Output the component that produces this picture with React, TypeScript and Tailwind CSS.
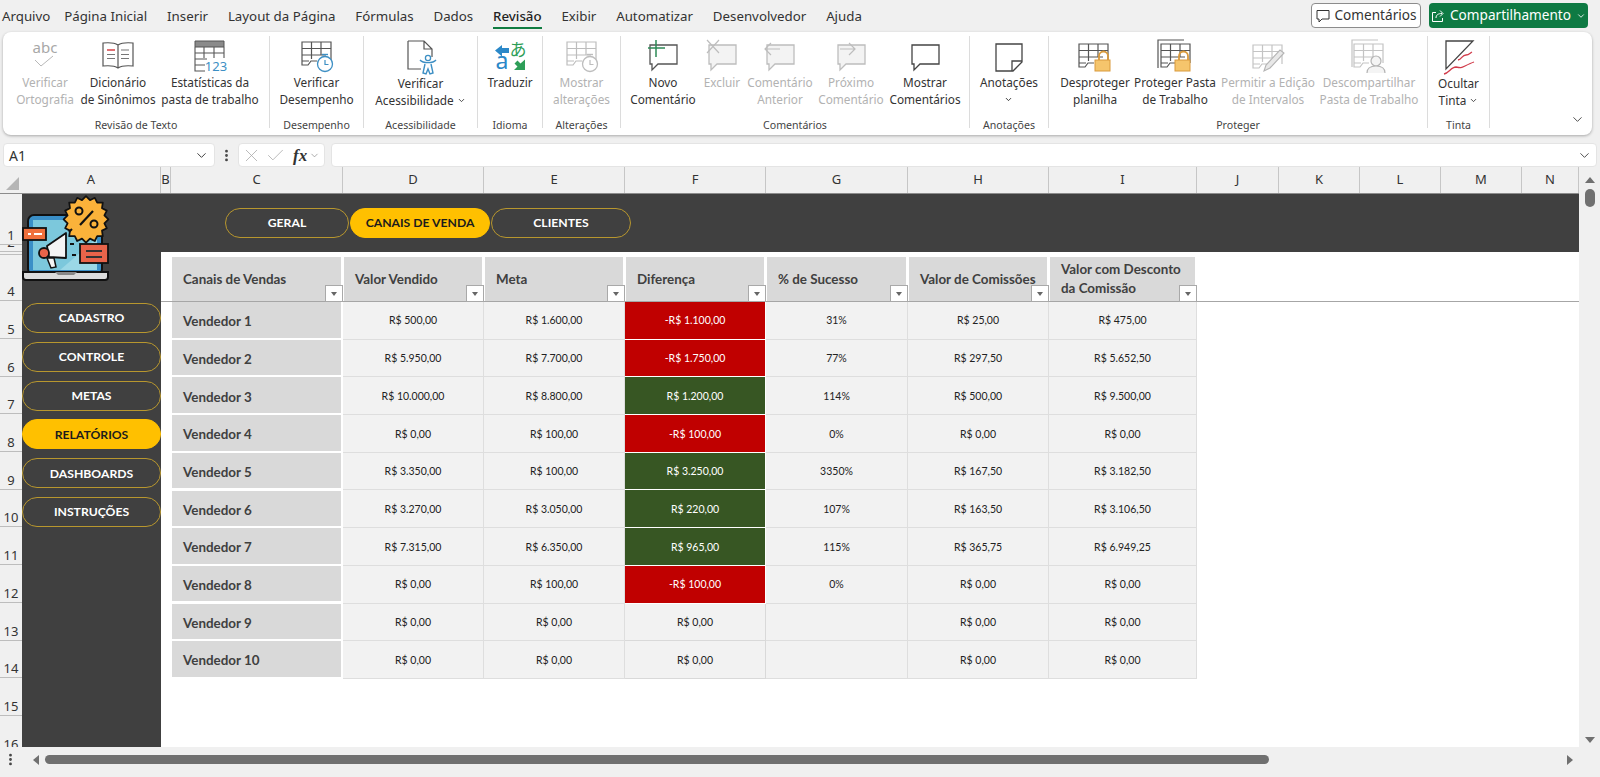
import React from 'react';
import { ChevronDown, EllipsisVertical, X, Check } from 'lucide-react';

const tabs = ['Arquivo', 'Página Inicial', 'Inserir', 'Layout da Página', 'Fórmulas', 'Dados', 'Revisão', 'Exibir', 'Automatizar', 'Desenvolvedor', 'Ajuda'];

const DARK = '#555555';

const GridLines: React.FC<{ c: string; fill?: string }> = ({ c, fill = 'none' }) => (
  <g fill="none" stroke={c} strokeWidth="1.2">
    <path d="M3 22V3h29v19M3 3h29" fill={fill} />
    <path d="M3 9.5h29M3 16h24M3 22h7M12.5 3v17M22 3v13" />
    <path d="M3 22v4h6l3-4h6" />
  </g>
);

const SpellIcon = () => (
  <svg width="36" height="34" viewBox="0 0 36 34" className="overflow-visible">
    <text x="18" y="14" textAnchor="middle" fontSize="15" fill="#a8a8a8" fontFamily="Noto Sans, sans-serif">abc</text>
    <path d="M8 21l6 6L26 17" fill="none" stroke="#b8b8b8" strokeWidth="1" />
  </svg>
);

const BookIcon = () => (
  <svg width="36" height="34" viewBox="0 0 36 34">
    <path d="M18 6C15 4 8 3.500 3 4v23c5-.5 12 0 15 2 3-2 10-2.500 15-2V4c-5-.5-12 0-15 2zM18 6v23" fill="#fff" stroke={DARK} strokeWidth="1.2" />
    <path d="M7 11h8" stroke="#d13438" strokeWidth="1.4" />
    <path d="M7 15.500h8M7 19.500h8M21 11h8M21 15.500h8M21 19.500h8" stroke="#777" strokeWidth="1.2" />
  </svg>
);

const StatsIcon = () => (
  <svg width="36" height="34" viewBox="0 0 36 34" className="overflow-visible">
    <path d="M3 2h29v6H3z" fill="#8a8a8a" stroke={DARK} />
    <path d="M3 8v24h10M32 8v11M3 14h29M3 20h12M3 26h10M12 8v11M22 8v11" fill="none" stroke={DARK} strokeWidth="1.1" />
    <text x="24" y="31.500" textAnchor="middle" fontSize="13" fill="#3d8fc4" fontFamily="Noto Sans, sans-serif">123</text>
  </svg>
);

const ClockGrid: React.FC<{ disabled?: boolean }> = ({ disabled }) => {
  const c = disabled ? '#bdbdbd' : DARK;
  const b = disabled ? '#bdbdbd' : '#3d8fc4';
  return (
    <svg width="36" height="34" viewBox="0 0 36 34">
      <GridLines c={c} />
      <circle cx="26" cy="25" r="7.500" fill="#fff" stroke={b} strokeWidth="1.3" />
      <path d="M26 21v4.500h3.500" fill="none" stroke={b} strokeWidth="1.2" />
      <path d="M23 15.500h6" stroke={b} strokeWidth="1.4" />
    </svg>
  );
};

const AccessIcon = () => (
  <svg width="36" height="38" viewBox="0 0 36 38">
    <path d="M5 2h16l8 8v8M5 2v28h13M21 2v8h8" fill="#fff" stroke={DARK} strokeWidth="1.2" />
    <circle cx="25" cy="19" r="2.600" fill="none" stroke="#3d8fc4" strokeWidth="1.3" />
    <path d="M17 21c3 3.500 13 3.500 16 0M22 25l-2 9 3 1 2-5 2 5 3-1-2-9" fill="none" stroke="#3d8fc4" strokeWidth="1.4" />
  </svg>
);

const TranslateIcon = () => (
  <svg width="36" height="34" viewBox="0 0 36 34" className="overflow-visible">
    <path d="M3 11.500L10 6v3h7v5h-7v3.500z" fill="#2b88c8" />
    <text x="10" y="30" textAnchor="middle" fontSize="23" fill="#2b88c8" fontFamily="Noto Sans, sans-serif">a</text>
    <text x="26" y="17" textAnchor="middle" fontSize="17" fill="#2e9e58" fontFamily="Noto Sans CJK JP, sans-serif">あ</text>
    <path d="M33 20.500v10.500H22l3.500-3.500-3-3 3-3 3 3z" fill="#2e9e58" />
  </svg>
);

const Bubble: React.FC<{ c: string; fill?: string; children?: React.ReactNode; x?: number }> = ({ c, fill = '#fff', children, x = 3 }) => (
  <svg width="36" height="34" viewBox="0 0 36 34">
    <path d={`M${x + 2} 6h27v19H${x + 10}l-6 6v-6H${x + 2}z`} fill={fill} stroke={c} strokeWidth="1.3" />
    {children}
  </svg>
);

const NoteIcon = () => (
  <svg width="36" height="34" viewBox="0 0 36 34">
    <path d="M5 5h26v18l-9 9H5z" fill="#fff" stroke="#444" strokeWidth="1.3" />
    <path d="M31 22H21v10" fill="none" stroke="#444" strokeWidth="1.3" />
  </svg>
);

const Lock = () => (
  <g>
    <path d="M22 21v-4a4.500 4.500 0 019 0v4" fill="none" stroke="#d99a3c" strokeWidth="1.800" />
    <rect x="18" y="21" width="15" height="11" fill="#f5c56c" stroke="#d99a3c" />
  </g>
);

const LockGrid: React.FC<{ stacked?: boolean }> = ({ stacked }) => (
  <svg width="36" height="34" viewBox="0 0 36 34">
    {stacked && <path d="M1 29V1h26" fill="none" stroke={DARK} strokeWidth="1.2" />}
    <g transform={stacked ? 'translate(1 2)' : 'translate(-1 2)'}>
      <GridLines c={DARK} />
    </g>
    <Lock />
  </svg>
);

const PencilGrid = () => (
  <svg width="36" height="34" viewBox="0 0 36 34">
    <g transform="translate(0 3)">
      <GridLines c="#c4c4c4" />
    </g>
    <path d="M14 32l2-6L30 11l4 3-14 15z" fill="#e8e8e8" stroke="#b4b4b4" strokeWidth="1.1" />
  </svg>
);

const PersonGrid = () => (
  <svg width="36" height="34" viewBox="0 0 36 34">
    <path d="M1 28V1h26" fill="none" stroke="#c4c4c4" strokeWidth="1.2" />
    <g transform="translate(0 2)">
      <GridLines c="#c4c4c4" />
    </g>
    <circle cx="25" cy="22" r="5" fill="#f4f4f4" stroke="#b4b4b4" strokeWidth="1.2" />
    <path d="M16 34c0-5 4-7 9-7s9 2 9 7" fill="#f4f4f4" stroke="#b4b4b4" strokeWidth="1.2" />
  </svg>
);

const InkIcon = () => (
  <svg width="36" height="38" viewBox="0 0 36 38">
    <path d="M5 2h27L5 30z" fill="#fff" stroke="#444" strokeWidth="1.300" />
    <path d="M17 21c4-1 4-5 8-5 3 0 4-2 6-3" fill="none" stroke="#d13c4b" strokeWidth="1.300" />
    <path d="M3 35c5-1 7-7 12-7 5 1 5 1 9-1s6-3 9-4" fill="none" stroke="#d13c4b" strokeWidth="1.300" />
  </svg>
);

const ThreadIcon: React.FC<{ kind: 'new' | 'del' | 'prev' | 'next' | 'show' }> = ({ kind }) => {
  if (kind === 'new')
    return (
      <Bubble c={DARK}>
        <path d="M11 1v17M3 9h17" stroke="#2e8b57" strokeWidth="1.500" />
      </Bubble>
    );
  if (kind === 'del')
    return (
      <Bubble c="#bdbdbd" fill="#f3f3f3">
        <path d="M3 1l12 13M15 1L3 14" stroke="#bdbdbd" strokeWidth="1.200" />
      </Bubble>
    );
  if (kind === 'prev')
    return (
      <Bubble c="#bdbdbd" fill="#f3f3f3">
        <path d="M3 10h15M9 4l-6 6 6 6" fill="none" stroke="#bdbdbd" strokeWidth="1.200" />
      </Bubble>
    );
  if (kind === 'next')
    return (
      <Bubble c="#bdbdbd" fill="#f3f3f3">
        <path d="M7 10h15M16 4l6 6-6 6" fill="none" stroke="#bdbdbd" strokeWidth="1.200" />
      </Bubble>
    );
  return <Bubble c="#444" />;
};

interface BtnProps {
  w: number;
  icon: React.ReactNode;
  lines: React.ReactNode[];
  disabled?: boolean;
  low?: boolean;
}

const RibbonBtn: React.FC<BtnProps> = ({ w, icon, lines, disabled, low }) => (
  <div className={`flex shrink-0 flex-col items-center pt-[3px] ${disabled ? 'text-[#b2b2b2]' : 'text-[#333333]'}`} style={{ width: w }}>
    <div className="flex h-[34px] items-start justify-center">{icon}</div>
    <div className={`whitespace-nowrap text-center text-[11.8px] leading-[17px] ${low ? 'mt-[2px]' : 'mt-[1px]'}`}>
      {lines.map((l, i) => (
        <div key={i} className="flex h-[17px] items-center justify-center">{l}</div>
      ))}
    </div>
  </div>
);

const Group: React.FC<{ w: number; pl?: number; label: string; children: React.ReactNode }> = ({ w, pl = 0, label, children }) => (
  <div className="flex h-[92px] shrink-0 flex-col border-r border-[#dcdcdc]" style={{ width: w }}>
    <div className="flex h-[80px] shrink-0 justify-center" style={{ paddingLeft: pl, justifyContent: pl ? 'flex-start' : 'center' }}>{children}</div>
    <div className="h-[18px] shrink-0 text-center text-[10.6px] leading-[18px] text-[#444444]">{label}</div>
  </div>
);

const Chev = () => <ChevronDown size={9} strokeWidth={2.5} className="ml-[3px] text-[#444444]" />;

const Ribbon = () => (
  <div className="relative mx-[3px] flex h-[103px] w-[1589px] items-start rounded-lg bg-white pt-[4px] shadow-[0_1px_3px_rgba(0,0,0,0.3)]">
    <Group w={267} pl={7} label="Revisão de Texto">
      <RibbonBtn w={70} disabled icon={<SpellIcon />} lines={['Verificar', 'Ortografia']} />
      <RibbonBtn w={76} icon={<BookIcon />} lines={['Dicionário', 'de Sinônimos']} />
      <RibbonBtn w={108} icon={<StatsIcon />} lines={['Estatísticas da', 'pasta de trabalho']} />
    </Group>
    <Group w={94} label="Desempenho">
      <RibbonBtn w={92} icon={<ClockGrid />} lines={['Verificar', 'Desempenho']} />
    </Group>
    <Group w={114} label="Acessibilidade">
      <RibbonBtn w={110} low icon={<AccessIcon />} lines={['Verificar', <>Acessibilidade <Chev /></>]} />
    </Group>
    <Group w={65} label="Idioma">
      <RibbonBtn w={60} icon={<TranslateIcon />} lines={['Traduzir']} />
    </Group>
    <Group w={78} label="Alterações">
      <RibbonBtn w={74} disabled icon={<ClockGrid disabled />} lines={['Mostrar', 'alterações']} />
    </Group>
    <Group w={349} pl={8} label="Comentários">
      <RibbonBtn w={68} icon={<ThreadIcon kind="new" />} lines={['Novo', 'Comentário']} />
      <RibbonBtn w={50} disabled icon={<ThreadIcon kind="del" />} lines={['Excluir']} />
      <RibbonBtn w={66} disabled icon={<ThreadIcon kind="prev" />} lines={['Comentário', 'Anterior']} />
      <RibbonBtn w={76} disabled icon={<ThreadIcon kind="next" />} lines={['Próximo', 'Comentário']} />
      <RibbonBtn w={72} icon={<ThreadIcon kind="show" />} lines={['Mostrar', 'Comentários']} />
    </Group>
    <Group w={79} label="Anotações">
      <RibbonBtn w={76} icon={<NoteIcon />} lines={['Anotações', <ChevronDown size={9} strokeWidth={2.5} />]} />
    </Group>
    <Group w={379} pl={4} label="Proteger">
      <RibbonBtn w={84} icon={<LockGrid />} lines={['Desproteger', 'planilha']} />
      <RibbonBtn w={76} icon={<LockGrid stacked />} lines={['Proteger Pasta', 'de Trabalho']} />
      <RibbonBtn w={110} disabled icon={<PencilGrid />} lines={['Permitir a Edição', 'de Intervalos']} />
      <RibbonBtn w={92} disabled icon={<PersonGrid />} lines={['Descompartilhar', 'Pasta de Trabalho']} />
    </Group>
    <Group w={62} label="Tinta">
      <RibbonBtn w={56} low icon={<InkIcon />} lines={['Ocultar', <>Tinta <Chev /></>]} />
    </Group>
    <ChevronDown size={15} strokeWidth={1.5} className="absolute bottom-[8px] right-[7px] text-[#444444]" />
  </div>
);

const FormulaBar = () => (
  <div className="mt-[8px] flex h-[24px] items-stretch px-[3px] text-[#333333]">
    <div className="flex w-[212px] items-center justify-between rounded border border-[#e4e4e4] bg-white pl-[5px] pr-[5px] text-[14px]">
      <span className="pt-[1px]">A1</span>
      <ChevronDown size={15} strokeWidth={1.5} />
    </div>
    <div className="flex w-[23px] items-center justify-center">
      <EllipsisVertical size={15} strokeWidth={2.5} className="text-[#444444]" />
    </div>
    <div className="flex w-[87px] items-center rounded border border-[#e4e4e4] bg-white pl-[2px]">
      <X size={21} strokeWidth={0.9} className="text-[#a8a8a8]" />
      <Check size={21} strokeWidth={0.9} className="ml-[3px] text-[#a8a8a8]" />
      <span className="ml-[7px] font-['Liberation_Serif',serif] text-[17px] font-bold italic leading-none text-[#333333]">fx</span>
      <ChevronDown size={11} strokeWidth={1.5} className="ml-[2px] text-[#888888]" />
    </div>
    <div className="ml-[6px] flex flex-1 items-center justify-end rounded border border-[#e4e4e4] bg-white pr-[4px]">
      <ChevronDown size={15} strokeWidth={1.5} className="text-[#444444]" />
    </div>
  </div>
);

const columns = [
  { n: 'A', w: 139 },
  { n: 'B', w: 10 },
  { n: 'C', w: 172 },
  { n: 'D', w: 141 },
  { n: 'E', w: 141 },
  { n: 'F', w: 141 },
  { n: 'G', w: 142 },
  { n: 'H', w: 141 },
  { n: 'I', w: 148 },
  { n: 'J', w: 82 },
  { n: 'K', w: 81 },
  { n: 'L', w: 81 },
  { n: 'M', w: 81 },
  { n: 'N', w: 57 },
];

const ColumnHeaders = () => (
  <div className="flex h-[27px] shrink-0 border-b border-[#8c8c8c]">
    <div className="relative w-[22px] shrink-0">
      <div className="absolute bottom-[3px] right-[3px] h-0 w-0 border-b-[13px] border-l-[13px] border-b-[#b5b5b5] border-l-transparent" />
    </div>
    {columns.map((c) => (
      <div key={c.n} className="flex shrink-0 items-center justify-center border-r border-[#c6c6c6] text-[13px] text-[#333333]" style={{ width: c.w }}>
        {c.n}
      </div>
    ))}
  </div>
);

const rowHeads: [string, number][] = [
  ['1', 51], ['2', 7], ['3', 3], ['4', 46], ['5', 38], ['6', 37.7], ['7', 37.7], ['8', 37.7], ['9', 37.7], ['10', 37.7],
  ['11', 37.7], ['12', 37.7], ['13', 37.7], ['14', 37.7], ['15', 37.7], ['16', 37.7],
];

const RowHeaders = () => (
  <div className="h-full w-[22px] shrink-0 overflow-hidden text-[13px] text-[#333333]">
    {rowHeads.map(([n, h]) => (
      <div key={n} className="flex items-end justify-center overflow-hidden border-b border-[#bdbdbd] leading-[17px]" style={{ height: h }}>
        {n !== '3' && <span className="block">{n}</span>}
      </div>
    ))}
  </div>
);

const Logo = () => (
  <svg className="absolute left-[-2px] top-[-2px]" width="100" height="92" viewBox="0 0 100 92">
    <rect x="8" y="23" width="74" height="60" rx="6" fill="#3a8fc7" stroke="#111" strokeWidth="2" />
    <rect x="13" y="28" width="64" height="50" fill="#7cc8dc" />
    <path d="M40 78l37-32v32z" fill="#9bd8e6" />
    <path d="M3 80h85v5a3 3 0 01-3 3H6a3 3 0 01-3-3z" fill="#dcdcdc" stroke="#111" strokeWidth="2" />
    <path d="M35 80h22l-3 3H38z" fill="#888888" />
    <g transform="translate(66 25) scale(0.8) translate(-65 -29)">
      <path d="M65 3l5 5 6-3 3 6 7 0-1 7 6 3-3 6 5 5-5 5 3 6-6 3 1 7-7 0-3 6-6-3-5 5-5-5-6 3-3-6-7 0 1-7-6-3 3-6-5-5 5-5-3-6 6-3-1-7 7 0 3-6 6 3z" fill="#fbb23a" stroke="#111" strokeWidth="2.200" strokeLinejoin="round" />
    </g>
    <circle cx="59" cy="19" r="3.500" fill="none" stroke="#111" strokeWidth="2" />
    <circle cx="74" cy="32" r="3.500" fill="none" stroke="#111" strokeWidth="2" />
    <path d="M60 33l13-14" stroke="#111" strokeWidth="2.200" />
    <rect x="3" y="36" width="23" height="12" fill="#f0703c" stroke="#111" strokeWidth="1.800" />
    <path d="M8 42h3M14 42h8" stroke="#fff" strokeWidth="2" />
    <rect x="60" y="52" width="28" height="19" fill="#e8644a" stroke="#111" strokeWidth="1.800" />
    <path d="M66 59h16M66 65h16" stroke="#333333" strokeWidth="1.800" />
    <path d="M27 54l19-13 0 25-17-1z" fill="#f4f4f4" stroke="#111" strokeWidth="1.800" strokeLinejoin="round" />
    <circle cx="24" cy="61" r="5" fill="#e8644a" stroke="#111" strokeWidth="1.800" />
    <path d="M27 66l7 0 2 9-5 1z" fill="#f4f4f4" stroke="#111" strokeWidth="1.500" />
    <path d="M49 40l3-3M50 52h4M52 63h4" stroke="#111" strokeWidth="2" />
  </svg>
);

const Pill: React.FC<{ label: string; active?: boolean; w: number }> = ({ label, active, w }) => (
  <div
    className={`flex h-[30px] shrink-0 items-center justify-center rounded-full border pt-[1px] text-[12.2px] font-bold ${active ? 'border-[#ffc000] bg-[#ffc000] text-[#1c1c1c]' : 'border-[#b8972e] bg-[#404040] text-white'}`}
    style={{ width: w }}
  >
    {label}
  </div>
);

const nav = ['CADASTRO', 'CONTROLE', 'METAS', 'RELATÓRIOS', 'DASHBOARDS', 'INSTRUÇÕES'];

const headers = ['Canais de Vendas', 'Valor Vendido', 'Meta', 'Diferença', '% de Sucesso', 'Valor de Comissões', 'Valor com Desconto da Comissão'];

type Row = [string, string, string, string, string, string, string];

const rows: Row[] = [
  ['Vendedor 1', 'R$ 500,00', 'R$ 1.600,00', '-R$ 1.100,00', '31%', 'R$ 25,00', 'R$ 475,00'],
  ['Vendedor 2', 'R$ 5.950,00', 'R$ 7.700,00', '-R$ 1.750,00', '77%', 'R$ 297,50', 'R$ 5.652,50'],
  ['Vendedor 3', 'R$ 10.000,00', 'R$ 8.800,00', 'R$ 1.200,00', '114%', 'R$ 500,00', 'R$ 9.500,00'],
  ['Vendedor 4', 'R$ 0,00', 'R$ 100,00', '-R$ 100,00', '0%', 'R$ 0,00', 'R$ 0,00'],
  ['Vendedor 5', 'R$ 3.350,00', 'R$ 100,00', 'R$ 3.250,00', '3350%', 'R$ 167,50', 'R$ 3.182,50'],
  ['Vendedor 6', 'R$ 3.270,00', 'R$ 3.050,00', 'R$ 220,00', '107%', 'R$ 163,50', 'R$ 3.106,50'],
  ['Vendedor 7', 'R$ 7.315,00', 'R$ 6.350,00', 'R$ 965,00', '115%', 'R$ 365,75', 'R$ 6.949,25'],
  ['Vendedor 8', 'R$ 0,00', 'R$ 100,00', '-R$ 100,00', '0%', 'R$ 0,00', 'R$ 0,00'],
  ['Vendedor 9', 'R$ 0,00', 'R$ 0,00', 'R$ 0,00', '', 'R$ 0,00', 'R$ 0,00'],
  ['Vendedor 10', 'R$ 0,00', 'R$ 0,00', 'R$ 0,00', '', 'R$ 0,00', 'R$ 0,00'],
];

const FilterBtn = () => (
  <div className="absolute bottom-[-1px] right-[-2px] flex h-[17px] w-[18px] items-center justify-center border border-[#a9a9a9] bg-white">
    <div className="h-0 w-0 border-x-[3.5px] border-t-[4px] border-x-transparent border-t-[#666666]" />
  </div>
);

const diffClass = (v: string) => {
  if (v.startsWith('-')) return 'bg-[#c00000] text-white border-white';
  if (v === 'R$ 0,00') return 'bg-[#f2f2f2] text-[#222222] border-[#d9d9d9]';
  return 'bg-[#375623] text-white border-white';
};

const Table = () => (
  <div className="grid w-[1026px] grid-cols-[172px_141px_141px_141px_142px_141px_148px] font-['Lato',sans-serif]">
    {rows.map((r) =>
      r.map((v, i) =>
        i === 0 ? (
          <div key={r[0] + i} className="flex h-[37.7px] items-center pb-[2px] pl-[1px] pr-[2px]">
            <div className="flex h-[35.5px] w-full items-center bg-[#d9d9d9] pl-[11px] pt-[3px] text-[13.4px] font-bold text-[#404040]">{v}</div>
          </div>
        ) : (
          <div
            key={r[0] + i}
            className={`flex h-[37.7px] items-center justify-center border-b border-r pt-[2px] text-[10.5px] ${i === 3 ? diffClass(v) : 'border-[#dedede] bg-[#f2f2f2] text-[#222222]'}`}
          >
            {v}
          </div>
        )
      )
    )}
  </div>
);

const Sheet = () => (
  <div className="relative flex min-h-0 flex-1 flex-col overflow-hidden">
    <ColumnHeaders />
    <div className="flex min-h-0 flex-1">
      <RowHeaders />
      <div className="relative flex min-w-0 flex-1 flex-col font-['Lato',sans-serif]">
        <div className="flex h-[58px] shrink-0 gap-[1px] bg-[#404040] pl-[203px] pt-[14px]">
          <Pill label="GERAL" w={124} />
          <Pill label="CANAIS DE VENDA" active w={140} />
          <Pill label="CLIENTES" w={140} />
        </div>
        <div className="flex min-h-0 flex-1">
          <div className="flex w-[139px] shrink-0 flex-col gap-[8.8px] bg-[#404040] pt-[51px]">
            {nav.map((n) => (
              <Pill key={n} label={n} active={n === 'RELATÓRIOS'} w={139} />
            ))}
          </div>
          <div className="min-w-0 flex-1 bg-white">
            <div className="h-[50px] border-b border-[#a6a6a6] pt-[5px]">
              <div className="ml-[10px] grid w-[1026px] grid-cols-[172px_141px_141px_141px_142px_141px_148px]">
                {headers.map((h, i) => (
                  <div key={h} className="pl-[1px] pr-[2px]">
                    <div className="relative flex h-[44px] items-center bg-[#d9d9d9] pl-[11px] pr-[8px] text-[13.4px] font-bold leading-[19px] text-[#404040]">
                      <span className={i === 6 ? 'w-[128px]' : 'whitespace-nowrap'}>{h}</span>
                      <FilterBtn />
                    </div>
                  </div>
                ))}
              </div>
            </div>
            <div className="ml-[10px]">
              <Table />
            </div>
          </div>
        </div>
        <Logo />
      </div>
    </div>
  </div>
);

const VScroll = () => (
  <div className="relative w-[21px] shrink-0">
    <div className="absolute left-[6px] top-[10px] h-0 w-0 border-x-[5px] border-b-[6px] border-x-transparent border-b-[#707070]" />
    <div className="absolute left-[6px] top-[22px] h-[18px] w-[10px] rounded-full bg-[#707070]" />
    <div className="absolute bottom-[4px] left-[6px] h-0 w-0 border-x-[5px] border-t-[6px] border-x-transparent border-t-[#707070]" />
  </div>
);

const HScroll = () => (
  <div className="flex h-[30px] shrink-0 items-center pb-[5px] pl-[3px]">
    <EllipsisVertical size={15} strokeWidth={2.5} className="text-[#444444]" />
    <div className="ml-[15px] h-0 w-0 border-y-[5px] border-r-[6px] border-y-transparent border-r-[#707070]" />
    <div className="ml-[6px] h-[9px] w-[1224px] rounded-full bg-[#707070]" />
    <div className="ml-[298px] h-0 w-0 border-y-[5px] border-l-[6px] border-y-transparent border-l-[#707070]" />
  </div>
);

export default function App() {
  return (
    <div className="flex h-[777px] w-[1600px] flex-col overflow-hidden bg-[#f0f0f0] font-['Noto_Sans',sans-serif]">
      <div className="flex h-[32px] shrink-0 items-start">
        <div className="flex gap-[19.8px] pl-[2px] pt-[5px] text-[13.3px] leading-[22px] text-[#333333]">
          {tabs.map((t) => (
            <div key={t} className={t === 'Revisão' ? 'border-b-[2.5px] border-[#107c41] font-medium text-[#222222]' : t === 'Arquivo' ? 'mr-[-6px]' : ''}>
              {t}
            </div>
          ))}
        </div>
        <div className="ml-auto mr-[12px] mt-[3px] flex items-center gap-[8px] text-[13.6px]">
          <div className="flex h-[25px] w-[110px] items-center justify-center gap-[5px] rounded border border-[#8c8c8c] bg-white text-[#333333]">
            <svg width="14" height="14" viewBox="0 0 14 14">
              <path d="M1 1.500h12v8.500H6l-3 3v-3H1z" fill="none" stroke="#333333" />
            </svg>
            Comentários
          </div>
          <div className="flex h-[25px] w-[159px] items-center justify-center gap-[5px] rounded bg-[#0e7a43] text-white">
            <svg width="14" height="14" viewBox="0 0 14 14">
              <path d="M5 3.500H1.500v9h10V9M5 9c0-3 2-4.500 6-4.500M9 1.500l3 3-3 3" fill="none" stroke="#fff" />
            </svg>
            Compartilhamento
            <ChevronDown size={10} strokeWidth={2} />
          </div>
        </div>
      </div>
      <Ribbon />
      <FormulaBar />
      <div className="flex min-h-0 flex-1">
        <Sheet />
        <VScroll />
      </div>
      <HScroll />
    </div>
  );
}
